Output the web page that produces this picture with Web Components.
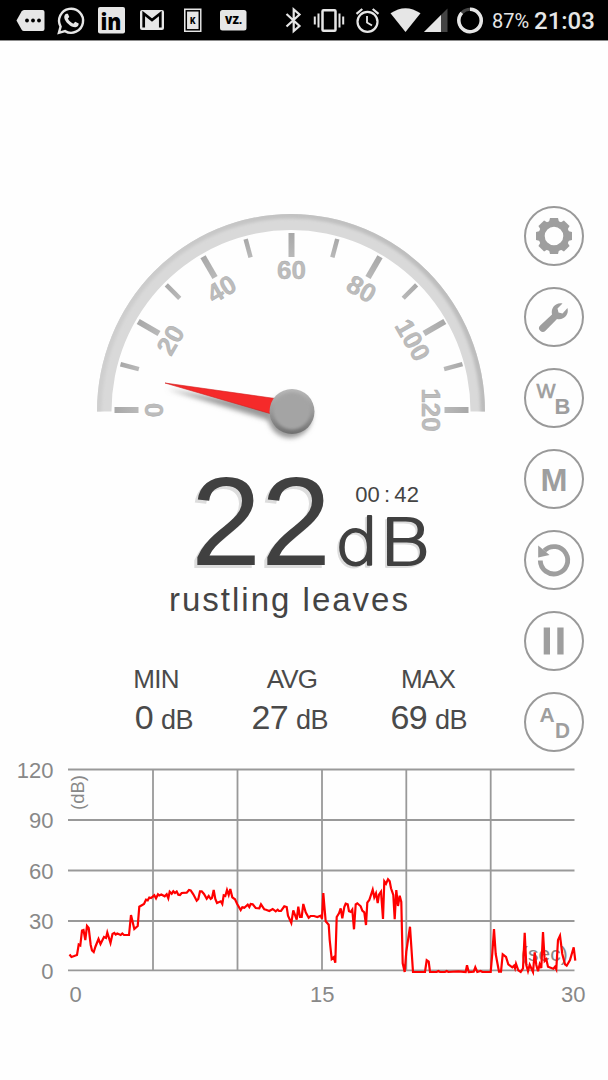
<!DOCTYPE html>
<html lang="en">
<head>
<meta charset="utf-8">
<title>Sound Meter</title>
<style>
  body {
    margin: 0;
    background: #fefefe;
    font-family: "Liberation Sans", Arial, sans-serif;
    color: #444;
  }
</style>
</head>
<body>
<sound-meter></sound-meter>

<script>
class StatusBar extends HTMLElement {
    constructor() {
        super();
        const shadowRoot = this.attachShadow({ mode: 'open' });
        const battery = this.getAttribute('battery');
        const time = this.getAttribute('time');
        shadowRoot.innerHTML = `
        <style>
            :host {
                display: flex;
                height: 40px;
                background: #000;
                border-bottom: 1px solid #8c8c8c;
                color: #e6e6e6;
                font-family: Roboto, sans-serif;
                align-items: center;
            }
            svg {
                flex: none;
                height: 40px;
                fill: #e6e6e6;
            }
            .line {
                fill: none;
                stroke: #e6e6e6;
            }
            .battery {
                margin-left: 5px;
                width: 42px;
                font-size: 20px;
                line-height: 40px;
                padding-top: 2px;
            }
            .time {
                font-size: 24px;
                font-weight: 500;
                line-height: 40px;
                padding-top: 2px;
            }
        </style>
        <svg width="50" viewBox="0 0 50 40">
            <path d="M24 10H42.500Q44.500 10 44.500 12V29Q44.500 31 42.500 31H24Q22.500 31 21.500 29.500L16.500 20.500L21.500 11.500Q22.500 10 24 10Z"/>
            <g fill="#000"><circle cx="27" cy="20.500" r="1.900"/><circle cx="33" cy="20.500" r="1.900"/><circle cx="39" cy="20.500" r="1.900"/></g>
        </svg>
        <svg width="40" viewBox="50 0 40 40">
            <path class="line" stroke-width="2.400" d="M58.900 32.800L60.600 26.600A12 12 0 1 1 65 31.100Z"/>
            <path d="M66.200 13.800C65 14.200 64 16 64.300 18C65 22 71 27.500 75.500 27.300C77.700 27 78.800 25.500 78.700 23.600L75.200 21.700L73.400 23.700C71 23 68.800 20.800 67.900 18.600L69.300 17L67.900 13.800Z"/>
        </svg>
        <svg width="42" viewBox="90 0 42 40">
            <rect x="98" y="7" width="27" height="26.500" rx="2"/>
            <text x="100.500" y="29.500" fill="#000" font-family="Open Sans" font-weight="800" font-size="23" textLength="21" lengthAdjust="spacingAndGlyphs">in</text>
        </svg>
        <svg width="42" viewBox="132 0 42 40">
            <rect x="140" y="10" width="24" height="20" rx="2"/>
            <path d="M143.700 27.500V13.500L152 20L160.300 13.500V27.500" fill="none" stroke="#000" stroke-width="2.700"/>
        </svg>
        <svg width="38" viewBox="174 0 38 40">
            <rect x="184" y="8.500" width="17.500" height="23.500"/>
            <rect x="186.300" y="10.800" width="13" height="19" fill="none" stroke="#000" stroke-width="1.500"/>
            <text x="189.900" y="24" fill="#000" font-size="8.500" font-weight="900">K</text>
        </svg>
        <svg width="60" viewBox="212 0 60 40">
            <rect x="220" y="10" width="26.500" height="20.500" rx="2.500"/>
            <text x="225" y="24" fill="#000" font-family="Open Sans" font-size="10.500" font-weight="800" textLength="17">VZ.</text>
        </svg>
        <svg width="35" viewBox="272 0 35 40">
            <path class="line" stroke-width="2.200" d="M286.500 14L299.500 26L293.700 31V9.500L299.500 14.500L286.500 26.500"/>
        </svg>
        <svg width="43" viewBox="307 0 43 40">
            <rect class="line" stroke-width="2.500" x="322.500" y="10.200" width="13" height="20.500" rx="1"/>
            <path class="line" stroke-width="2" d="M318.500 13.500V27.500M314.800 16.500V24.500M339.500 13.500V27.500M343.200 16.500V24.500"/>
        </svg>
        <svg width="35" viewBox="350 0 35 40">
            <circle class="line" stroke-width="2.200" cx="367.500" cy="21.800" r="10"/>
            <path class="line" stroke-width="2.200" d="M356.500 13.800L362.300 9M378.500 13.800L372.700 9"/>
            <path class="line" stroke-width="1.800" d="M367 16V22.500L372 25.500"/>
        </svg>
        <svg width="37" viewBox="385 0 37 40">
            <path d="M390.500 13.300Q405.500 3 420.500 13.300L405.500 32Z"/>
        </svg>
        <svg width="30" viewBox="422 0 30 40">
            <path d="M447.500 8.500V32H424Z" fill="#444"/>
            <path d="M441 15V32H424Z"/>
        </svg>
        <svg width="35" viewBox="452 0 35 40">
            <circle class="line" style="stroke:#444" stroke-width="3" cx="470" cy="20.500" r="11.200"/>
            <path class="line" stroke-width="3.500" d="M470 9.300A11.200 11.200 0 1 1 461.800 12.900"/>
        </svg>
        <span class="battery">${battery}</span>
        <span class="time">${time}</span>
        `;
    }
}
customElements.define('status-bar', StatusBar);


class DbGauge extends HTMLElement {
    constructor() {
        super();
        const shadowRoot = this.attachShadow({ mode: 'open' });
        const cx = 291.5;
        const cy = 410;
        let marks = '';
        // 15 degrees for every 10 dB, labels on the even ones
        for (let db = 0; db <= 120; db += 10) {
            const angle = db * 1.5 - 90;
            const major = db % 20 === 0;
            const textY = db === 0 ? cy - 128.3 : cy - 130.8;
            marks += `<g transform="rotate(${angle} ${cx} ${cy})">
                <rect x="${major ? cx - 3 : cx - 2.3}" y="${cy - 177}" width="${major ? 6 : 4.5}" height="${major ? 24 : 19}" fill="url(#tick)"/>
                ${major ? `<text x="${cx}" y="${textY}">${db}</text>` : ''}
            </g>`;
        }
        shadowRoot.innerHTML = `
        <style>
            :host {
                display: block;
                height: 246px;
            }
            svg {
                display: block;
            }
            text {
                font-size: 26px;
                font-weight: bold;
                text-anchor: middle;
                fill: #bcbcbc;
                stroke: #a9a9a9;
                stroke-width: 0.4;
            }
        </style>
        <svg width="524" height="246" viewBox="0 206 524 246">
            <defs>
                <linearGradient id="tick" x1="0" y1="0" x2="0" y2="1">
                    <stop offset="0" stop-color="#a8a8a8"/>
                    <stop offset="1" stop-color="#b9b9b9"/>
                </linearGradient>
                <linearGradient id="side" x1="0" y1="0" x2="1" y2="0">
                    <stop offset="0" stop-color="#cfcfcf"/>
                    <stop offset="0.500" stop-color="#c2c2c2"/>
                    <stop offset="1" stop-color="#bcbcbc"/>
                </linearGradient>
                <linearGradient id="rim" x1="0" y1="0" x2="0" y2="1">
                    <stop offset="0" stop-color="#b8b8b8"/>
                    <stop offset="0.500" stop-color="#999"/>
                    <stop offset="1" stop-color="#707070"/>
                </linearGradient>
                <filter id="soft" x="-20%" y="-50%" width="140%" height="200%"><feGaussianBlur stdDeviation="2.500"/></filter>
                <filter id="edge"><feGaussianBlur stdDeviation="1.500"/></filter>
                <clipPath id="band"><path d="M97 411.500A194 197.500 0 0 1 485 411.500H470.500A179.500 181.500 0 0 0 111.500 411.500Z"/></clipPath>
            </defs>
            <g clip-path="url(#band)">
                <rect x="90" y="206" width="400" height="210" fill="#d9d9d9"/>
                <path d="M98 418V411.500A193 196.500 0 0 1 484 411.500V418" fill="none" stroke="url(#side)" stroke-width="7" filter="url(#edge)"/>
            </g>
            ${marks}
            <path d="M167 389L272 407L271 421Z" fill="#999" filter="url(#soft)"/>
            <circle cx="290" cy="416" r="22" fill="#999" filter="url(#soft)"/>
            <path d="M165 383L275 398.500V415Z" fill="#f52a2a" stroke="#d32020" stroke-width="0.600"/>
            <circle cx="292" cy="411.500" r="22.500" fill="url(#rim)"/>
            <circle cx="292" cy="411" r="18.500" fill="#a4a4a4" filter="url(#edge)"/>
        </svg>
        `;
    }
}
customElements.define('db-gauge', DbGauge);


class DbReadout extends HTMLElement {
    constructor() {
        super();
        const shadowRoot = this.attachShadow({ mode: 'open' });
        const [min, sec] = this.getAttribute('elapsed').split(':');
        shadowRoot.innerHTML = `
        <style>
            :host {
                display: block;
                padding-left: 191px;
            }
            .row {
                display: flex;
                height: 129px;
            }
            .value {
                padding-top: 7px;
                font-size: 126px;
                line-height: 126px;
                color: #404040;
                text-shadow: -3px 3px 0 #ddd;
            }
            .side {
                display: flex;
                flex-direction: column;
                padding-top: 31px;
                padding-left: 4px;
            }
            .elapsed {
                font-size: 22px;
                line-height: 24px;
                padding-left: 20px;
                letter-spacing: 0.2px;
                white-space: nowrap;
            }
            .elapsed span {
                margin: 0 4px;
            }
            svg {
                display: block;
                flex: none;
                margin: -7px 0 0 -1px;
            }
            .unit {
                font-family: "DejaVu Sans Light", "DejaVu Sans";
                font-weight: 200;
                font-size: 64px;
                stroke-linejoin: round;
                stroke-width: 2px;
            }
            p {
                margin: 0 0 0 -22px;
                font-size: 33px;
                line-height: 38px;
                letter-spacing: 2px;
                white-space: nowrap;
            }
        </style>
        <div class="row">
            <span class="value"><slot></slot></span>
            <div class="side">
                <span class="elapsed">${min}<span>:</span>${sec}</span>
                <svg width="110" height="84" viewBox="334 500 110 84">
                    <g class="unit" fill="#404040" stroke="#404040" style="filter: drop-shadow(-2px 2px 0 #ddd)">
                        <text transform="translate(334.700 565) scale(1.090 1)">d</text>
                        <text transform="translate(378.400 565) scale(1.240 1)">B</text>
                    </g>
                </svg>
            </div>
        </div>
        <p><slot name="hint"></slot></p>
        `;
    }
}
customElements.define('db-readout', DbReadout);


class DbStat extends HTMLElement {
    constructor() {
        super();
        const shadowRoot = this.attachShadow({ mode: 'open' });
        shadowRoot.innerHTML = `
        <style>
            :host {
                display: flex;
                flex-direction: column;
                width: 78px;
                color: #4a4a4a;
            }
            .label {
                font-size: 26px;
                line-height: 30px;
                letter-spacing: -0.8px;
                text-align: center;
            }
            .value {
                display: flex;
                justify-content: flex-end;
                align-items: baseline;
                gap: 8px;
                padding-right: var(--inset, 0);
                font-size: 34px;
                line-height: 46px;
                letter-spacing: -0.7px;
            }
            small {
                font-size: 27px;
                letter-spacing: -0.5px;
            }
        </style>
        <span class="label">${this.getAttribute('label')}</span>
        <span class="value"><slot></slot><small>dB</small></span>
        `;
    }
}
customElements.define('db-stat', DbStat);


class RoundButton extends HTMLElement {
    constructor() {
        super();
        const shadowRoot = this.attachShadow({ mode: 'open' });
        shadowRoot.innerHTML = `
        <style>
            :host {
                display: block;
                box-sizing: border-box;
                width: 60px;
                height: 60px;
                border: 2px solid #999;
                border-radius: 50%;
            }
            ::slotted(svg) {
                display: block;
                width: 56px;
                height: 56px;
                fill: #9e9e9e;
                font-weight: bold;
            }
        </style>
        <slot></slot>
        `;
    }
}
customElements.define('round-button', RoundButton);


class DbChart extends HTMLElement {
    constructor() {
        super();
        const shadowRoot = this.attachShadow({ mode: 'open' });
        const rows = [[120, 769.5], [90, 820], [60, 870.5], [30, 921], [0, 970.3]];
        const cols = [153, 237.5, 322, 406.3, 490.7];
        shadowRoot.innerHTML = `
        <style>
            :host {
                display: block;
                height: 258px;
            }
            svg {
                display: block;
            }
            text {
                font-size: 22px;
                fill: #888;
            }
        </style>
        <svg width="608" height="258" viewBox="0 752 608 258">
            <g stroke="#999" stroke-width="1.800">
                ${rows.map(r => `<path d="M68 ${r[1]}H574.500"/>`).join('')}
                ${cols.map(x => `<path d="M${x} 769V970"/>`).join('')}
            </g>
            <g text-anchor="end">
                ${rows.map(r => `<text x="53.500" y="${r[1] + 8.2}">${r[0]}</text>`).join('')}
            </g>
            <text x="69.500" y="1001.500">0</text>
            <text x="310" y="1001.500">15</text>
            <text x="561" y="1001.500">30</text>
            <text transform="translate(84.200 810) rotate(-90)" style="font-size:18.500px">(dB)</text>
            <text x="521" y="960.500" style="font-size:21px">(sec)</text>
            <polyline fill="none" stroke="#f00" stroke-width="2.200" points="${this.textContent.trim()}"/>
        </svg>
        `;
    }
}
customElements.define('db-chart', DbChart);


class SoundMeter extends HTMLElement {
    constructor() {
        super();
        const shadowRoot = this.attachShadow({ mode: 'open' });
        // one tooth of the settings gear, turned eight times
        let teeth = '';
        for (let a = 0; a < 360; a += 45) {
            teeth += `<path d="M22.500 16L24 10H32L33.500 16Z" transform="rotate(${a} 28 28)"/>`;
        }
        shadowRoot.innerHTML = `
        <style>
            :host {
                display: flex;
                flex-direction: column;
                width: 608px;
                height: 1080px;
                overflow: hidden;
            }
            main {
                display: grid;
                grid-template-columns: 524px 60px;
                margin-top: 165px;
                height: 546px;
            }
            .meter {
                display: flex;
                flex-direction: column;
            }
            .stats {
                display: flex;
                gap: 58px;
                padding: 45px 0 0 117px;
            }
            nav {
                display: flex;
                flex-direction: column;
                gap: 21px;
            }
        </style>
        <status-bar battery="87%" time="21:03"></status-bar>
        <main>
            <div class="meter">
                <db-gauge></db-gauge>
                <db-readout elapsed="00:42">22<span slot="hint">rustling leaves</span></db-readout>
                <div class="stats">
                    <db-stat label="MIN" style="--inset: 2px">0</db-stat>
                    <db-stat label="AVG" style="--inset: 3px">27</db-stat>
                    <db-stat label="MAX">69</db-stat>
                </div>
            </div>
            <nav>
                <round-button><svg viewBox="0 0 56 56">${teeth}<circle cx="28" cy="28" r="12.400" fill="none" stroke="#9e9e9e" stroke-width="6.200"/></svg></round-button>
                <round-button><svg viewBox="0 0 56 56">
                    <path d="M14.200 36.500L26 25.500C24.600 18.500 30 13 36.500 14.500L31.500 19.600L32.500 23.500L36.500 24.500L41.500 19C43.300 26 37.500 31.500 31 30L19.500 41.800A3.700 3.700 0 0 1 14.200 36.500Z"/>
                </svg></round-button>
                <round-button><svg viewBox="0 0 56 56" font-size="21">
                    <text x="10.500" y="28" textLength="19" lengthAdjust="spacingAndGlyphs" style="font-weight:normal" stroke="#9e9e9e" stroke-width="0.700">W</text>
                    <text x="28.500" y="44" font-size="22">B</text>
                </svg></round-button>
                <round-button><svg viewBox="0 0 56 56" font-size="32"><text x="14.600" y="40" textLength="27" lengthAdjust="spacingAndGlyphs">M</text></svg></round-button>
                <round-button><svg viewBox="0 0 56 56">
                    <path d="M14.300 28.500A13.700 13.700 0 1 0 18.300 18.600" fill="none" stroke="#9e9e9e" stroke-width="4.800"/>
                    <path d="M12.200 13.500V25.500L23.500 23Z"/>
                </svg></round-button>
                <round-button><svg viewBox="0 0 56 56"><path d="M17.700 14.500H24V41.500H17.700ZM31.300 14.500H37.600V41.500H31.300Z"/></svg></round-button>
                <round-button><svg viewBox="0 0 56 56" font-size="22">
                    <text x="13.500" y="28" font-size="21">A</text>
                    <text x="29" y="43.500" textLength="15" lengthAdjust="spacingAndGlyphs">D</text>
                </svg></round-button>
            </nav>
        </main>
        <db-chart>
            69.5,954.5 71.5,957 77,955 78.7,944.5 80.3,945.5 82,930.5 83.5,930 85.3,940 87,926 88.7,928 90.7,945 92,950.5 93.7,952 95.5,946.5
            98.5,939 100.5,944 104,937 106,938 107.3,932.5 110.5,943 112.5,934 114.3,933 115.7,934.5 117.3,933.5 120.7,935 122.3,933.5 124,935 129,935
            131,915 134.3,929 137.7,926 139.3,906.7 144,904 146,899.7 147.7,900.3 149.3,897.5 151,898 154.3,895.3 156,898.3 158,894.3 159.3,895.5 161.3,894.5
            164.7,896.3 166.7,894.3 168.3,898.3 169.7,891.7 171.7,893.7 173.3,891.3 175,893 176.7,891.5 178.3,894.7 180,895 181.7,893 186.7,892.7 189,890
            190.7,890.5 193.3,894.3 196.7,900.7 198.3,899 200,891.3 201.7,891.3 204,894 206.7,898.7 208.7,896 210.7,899 212,898 213.7,890 215.3,899
            217,903 220.7,901.3 222.3,904 223.7,895.3 225.3,896 227,890 228.7,895 230.3,889 232.3,897.3 235,899.3 237.3,904.3 240.7,910 242.3,907.3
            244.3,907.7 247.7,904.7 249.3,907 250.7,904 252.7,904.3 255.7,908 259.3,908.3 261,904.3 264.3,909.3 266,909.7 269.3,911 272.7,909 275.7,911.3
            277.7,909.7 279,911 281,911 284.3,906.3 286.7,907 288,915.7 291.3,923 293.3,910.3 296.7,919.7 298.3,906.7 300,917 301.7,917 303.3,904
            305.7,912.3 308.7,917.7 310.7,916 314,916 317.3,917 320.7,915.7 322,918.7 323.3,893 324.3,905.3 325.7,921.3 328.7,924.7 329.7,940 331.7,959
            333.7,957.3 335.3,962.7 336.7,917 339,913.3 340.7,908.3 342.3,918.3 344.3,907 345.7,903.7 347.7,904.3 349,911.3 350.7,912 352.3,909.7 354,929.3
            355.7,904.3 357.3,903.3 360.7,906.3 362.3,910.7 364.3,912.3 366,925 367.3,902.7 369.3,900 372.7,889.7 374.3,897.3 376,893.3 377.7,903 379,894.7
            381,891.7 383,919 384.3,881.3 386,883.7 388,879.3 389.7,881.3 391,888.3 393.3,895 394.7,919.3 396.3,890 398,906 399.7,895.7 401.3,902
            402.7,963.3 404.7,972 406.3,951.7 410,926.7 413,972 425,972 426.7,960.3 428.7,961.7 430,972 436.7,972 438.3,971 440,972 445,972 446.7,971
            448.3,972 458.3,971.3 465.7,972 467,965.3 468.7,972 473.7,971.7 475.3,967.3 477.3,972 480.7,971 482.3,972 490.7,972 492.3,953.3 494,929
            495.7,954 499,971.7 501,971.7 502.7,954.3 506,957 508.3,964.3 512.3,967.3 514,965.7 515,968.3 516,963.7 518.3,970.3 520.7,972 523,968.3
            524.7,932.7 526.3,965 528,971 529.7,964.7 533,972 534.7,952.3 536.3,965 538,971.3 539.7,964.3 541.3,968 543,932 544.7,961 546.3,959.3
            548,966.7 553.3,968.7 555,966.7 556.3,969.3 558,940 560,935.7 562.3,954 565,964.3 566.7,965.7 570,960 573.7,947.3 575.3,960.7
        </db-chart>
        `;
    }
}
customElements.define('sound-meter', SoundMeter);
</script>
</body>
</html>
